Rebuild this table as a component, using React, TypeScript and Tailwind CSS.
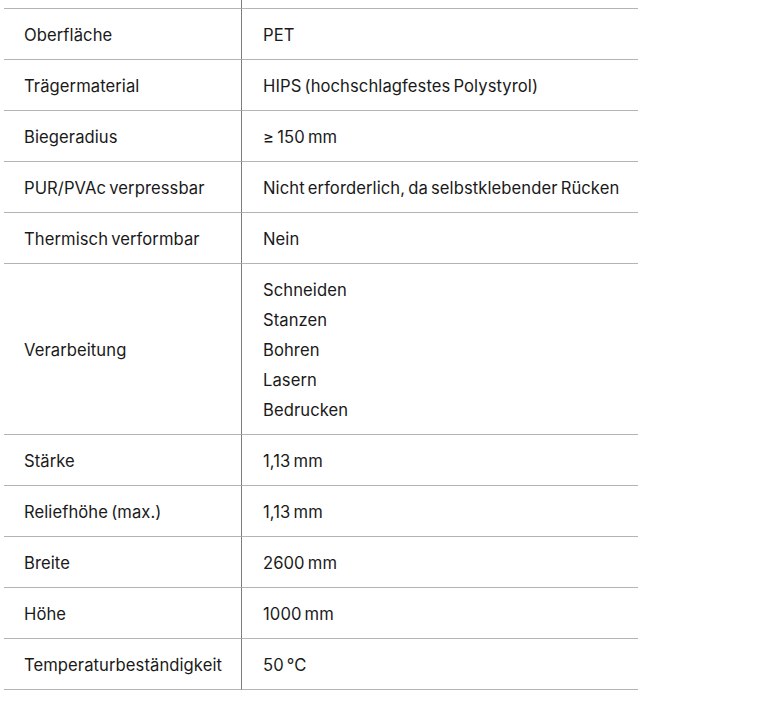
const rows: { label: string; value: string | string[] }[] = [
  { label: 'Oberfläche', value: 'PET' },
  { label: 'Trägermaterial', value: 'HIPS (hochschlagfestes Polystyrol)' },
  { label: 'Biegeradius', value: '≥ 150 mm' },
  { label: 'PUR/PVAc verpressbar', value: 'Nicht erforderlich, da selbstklebender Rücken' },
  { label: 'Thermisch verformbar', value: 'Nein' },
  { label: 'Verarbeitung', value: ['Schneiden', 'Stanzen', 'Bohren', 'Lasern', 'Bedrucken'] },
  { label: 'Stärke', value: '1,13 mm' },
  { label: 'Reliefhöhe (max.)', value: '1,13 mm' },
  { label: 'Breite', value: '2600 mm' },
  { label: 'Höhe', value: '1000 mm' },
  { label: 'Temperaturbeständigkeit', value: '50 °C' },
];

export default function App() {
  return (
    <div className="min-h-screen bg-white pl-[4px] font-['Inter',sans-serif] text-[16.6px] tracking-[0.08px] text-[#1a1a1a] [word-spacing:-1.6px]">
      <div className="grid w-[634px] grid-cols-[238px_1fr]">
        {/* row cut off at the top */}
        <div className="h-[9px] border-b border-r border-b-[#b4b4b4] border-r-[#7c7c7c]" />
        <div className="h-[9px] border-b border-[#b4b4b4]" />

        {rows.map((row) => (
          <div key={row.label} className="contents">
            <div className="flex items-center whitespace-nowrap border-b border-r border-b-[#b4b4b4] border-r-[#7c7c7c] pl-[20px] pr-[10px] pt-[11px] pb-[9px] leading-[30px]">
              {row.label}
            </div>
            <div className="whitespace-nowrap border-b border-[#b4b4b4] pl-[21px] pr-[10px] pt-[11px] pb-[9px] leading-[30px]">
              {Array.isArray(row.value) ? (
                <ul>
                  {row.value.map((v) => (
                    <li key={v}>{v}</li>
                  ))}
                </ul>
              ) : (
                row.value
              )}
            </div>
          </div>
        ))}
      </div>
    </div>
  );
}
